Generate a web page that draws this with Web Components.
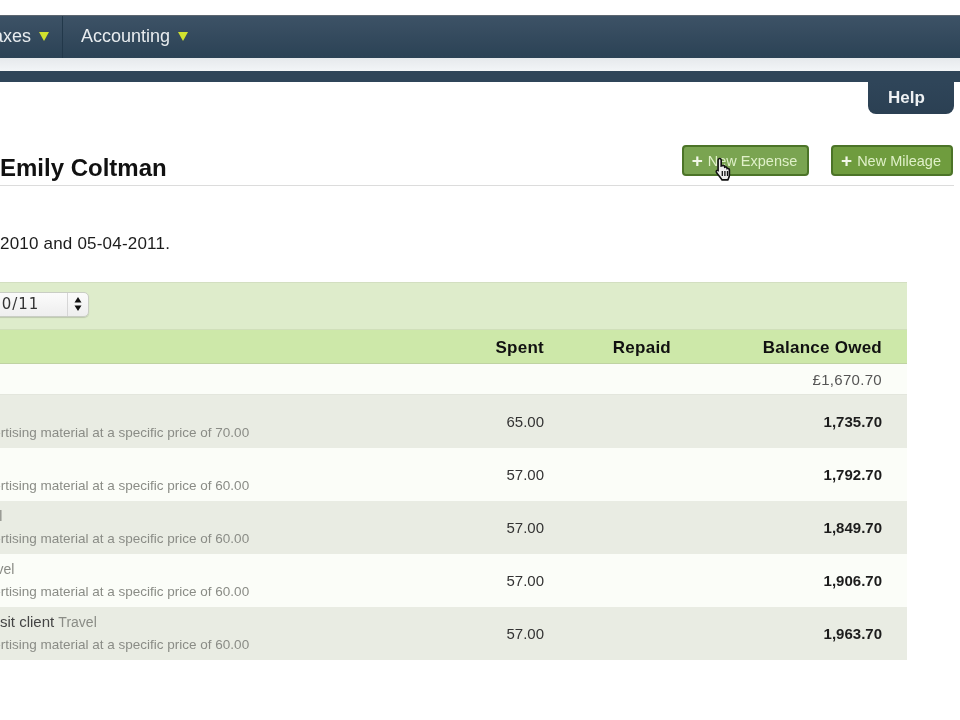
<!DOCTYPE html>
<html>
<head>
<meta charset="utf-8">
<title>Expenses</title>
<style>
	html, body { margin: 0; padding: 0; background: #fff; }
	body {
		width: 960px;
		height: 720px;
		overflow: hidden;
		position: relative;
		font-family: "Liberation Sans", Arial, sans-serif;
		color: #1c1c1c;
		filter: blur(0.6px);
	}
</style>
</head>
<body>
<main-nav>
	<nav-item style="--clip:-16px; --pad-right:13px" divider>Taxes</nav-item>
	<nav-item style="--clip:18px">Accounting</nav-item>
</main-nav>
<help-tab>Help</help-tab>
<page-head>
	<span>Emily Coltman</span>
	<new-button slot="actions" style="--w:127px; --bg:#7aa451">New Expense</new-button>
	<new-button slot="actions" style="--w:122px">New Mileage</new-button>
</page-head>
<date-range>2010 and 05-04-2011.</date-range>
<expense-table>
	<year-select slot="filter">2010/11</year-select>
	<expense-row head spent="Spent" repaid="Repaid" balance="Balance Owed" style="--h:34px"></expense-row>
	<expense-row opening balance="£1,670.70" style="--h:31px"></expense-row>
	<expense-row shade spent="65.00" balance="1,735.70" note="Advertising material at a specific price of 70.00"></expense-row>
	<expense-row spent="57.00" balance="1,792.70" note="Advertising material at a specific price of 60.00"></expense-row>
	<expense-row shade spent="57.00" balance="1,849.70" note="Advertising material at a specific price of 60.00"><em class="stub">Travel</em></expense-row>
	<expense-row spent="57.00" balance="1,906.70" note="Advertising material at a specific price of 60.00"><em class="inset">Travel</em></expense-row>
	<expense-row shade spent="57.00" balance="1,963.70" note="Advertising material at a specific price of 60.00">sit client <em>Travel</em></expense-row>
</expense-table>
<hand-cursor></hand-cursor>

<script>
class MainNav extends HTMLElement {
	constructor() {
		super();
		this.attachShadow({ mode: 'open' });
		this.shadowRoot.innerHTML = `
			<style>
				:host { display: block; margin-top: 15px; }
				.bar {
					display: flex;
					height: 43px;
					box-sizing: border-box;
					border-top: 1px solid #5c6670;
					background: linear-gradient(#3d5266, #2b4255);
				}
				.band { height: 13px; background: linear-gradient(#e6e9ec, #f2f5f7); }
				.sub { height: 11px; background: #2f4559; }
			</style>
			<div class="bar"><slot></slot></div>
			<div class="band"></div>
			<div class="sub"></div>
		`;
	}
}

class NavItem extends HTMLElement {
	constructor() {
		super();
		this.attachShadow({ mode: 'open' });
		this.shadowRoot.innerHTML = `
			<style>
				:host {
					display: flex;
					align-items: center;
					gap: 8px;
					margin-left: var(--clip, 0);
					padding-right: var(--pad-right, 0);
					padding-bottom: 2px;
					font-size: 18px;
					color: #e8ecef;
				}
				:host([divider]) { border-right: 1px solid #22384a; }
				i {
					width: 0;
					height: 0;
					margin-top: 1px;
					border-style: solid;
					border-width: 9px 5.500px 0 5.500px;
					border-color: #d2e22e transparent transparent transparent;
				}
			</style>
			<slot></slot><i></i>
		`;
	}
}

class HelpTab extends HTMLElement {
	constructor() {
		super();
		this.attachShadow({ mode: 'open' });
		this.shadowRoot.innerHTML = `
			<style>
				:host {
					display: flex;
					justify-content: center;
					align-items: center;
					box-sizing: border-box;
					width: 86px;
					height: 32px;
					margin-left: 868px;
					padding-right: 9px;
					border-radius: 0 0 8px 8px;
					background: linear-gradient(#2f4559, #2b4053);
					color: #eef1f3;
					font-size: 17px;
					font-weight: bold;
				}
			</style>
			<slot></slot>
		`;
	}
}

class PageHead extends HTMLElement {
	constructor() {
		super();
		this.attachShadow({ mode: 'open' });
		this.shadowRoot.innerHTML = `
			<style>
				:host {
					display: flex;
					justify-content: space-between;
					align-items: flex-start;
					box-sizing: border-box;
					width: 954px;
					height: 41px;
					margin-top: 31px;
					padding-right: 1px;
					border-bottom: 1px solid #dcdcdc;
					font-size: 24px;
					font-weight: bold;
					color: #111;
				}
				.title { padding-top: 10px; line-height: 26px; }
				.actions { display: flex; gap: 22px; }
			</style>
			<div class="title"><slot></slot></div>
			<div class="actions"><slot name="actions"></slot></div>
		`;
	}
}

class NewButton extends HTMLElement {
	constructor() {
		super();
		this.attachShadow({ mode: 'open' });
		this.shadowRoot.innerHTML = `
			<style>
				:host {
					display: flex;
					align-items: center;
					justify-content: center;
					gap: 5px;
					box-sizing: border-box;
					width: var(--w);
					height: 31px;
					padding-right: 2px;
					border: 2px solid #4c7428;
					border-radius: 4px;
					background: var(--bg, #6f9c3e);
					color: #dff0c8;
					font-size: 14.500px;
					font-weight: normal;
				}
				b { font-size: 19px; line-height: 18px; color: #f2f7e8; }
			</style>
			<b>+</b><slot></slot>
		`;
	}
}

class DateRange extends HTMLElement {
	constructor() {
		super();
		this.attachShadow({ mode: 'open' });
		this.shadowRoot.innerHTML = `
			<style>
				:host {
					display: block;
					margin-top: 48px;
					line-height: 20px;
					font-size: 17px;
					letter-spacing: 0.2px;
					color: #1c1c1c;
				}
			</style>
			<slot></slot>
		`;
	}
}

class YearSelect extends HTMLElement {
	constructor() {
		super();
		this.attachShadow({ mode: 'open' });
		this.shadowRoot.innerHTML = `
			<style>
				:host {
					display: flex;
					align-items: center;
					box-sizing: border-box;
					width: 120px;
					height: 25px;
					margin-left: -31px;
					border: 1px solid #c9cdc4;
					border-radius: 5px;
					background: linear-gradient(#fbfbfb, #eeeeee);
					box-shadow: 0 1px 1px rgba(0,0,0,0.15);
					font-family: "DejaVu Sans", sans-serif;
					font-size: 15px;
					color: #333;
				}
				span { flex: 1; letter-spacing: 1px; }
				i {
					display: flex;
					align-items: center;
					justify-content: center;
					width: 20px;
					height: 100%;
					border-left: 1px solid #d6d6d6;
				}
			</style>
			<span><slot></slot></span>
			<i><svg width="8" height="14" viewBox="0 0 8 14"><path d="M4 0 L7.500 5.500 H.5Z M4 14 L7.500 8.500 H.5Z" fill="#111"/></svg></i>
		`;
	}
}

class ExpenseTable extends HTMLElement {
	constructor() {
		super();
		this.attachShadow({ mode: 'open' });
		this.shadowRoot.innerHTML = `
			<style>
				:host {
					display: block;
					width: 907px;
					margin-top: 28px;
				}
				.filter {
					display: flex;
					align-items: center;
					box-sizing: border-box;
					height: 48px;
					padding-bottom: 4px;
					border-top: 1px solid #d3dfc1;
					border-bottom: 1px solid #d0dfba;
					background: #deeccb;
				}
			</style>
			<div class="filter"><slot name="filter"></slot></div>
			<slot></slot>
		`;
	}
}

class ExpenseRow extends HTMLElement {
	constructor() {
		super();
		this.attachShadow({ mode: 'open' });
		const text = (name) => this.getAttribute(name) || '';
		this.shadowRoot.innerHTML = `
			<style>
				:host {
					display: grid;
					grid-template-columns: 1fr 70px 127px 211px;
					align-items: center;
					box-sizing: border-box;
					height: var(--h, 53px);
					padding-right: 25px;
					background: #fbfdf8;
					font-size: 15px;
					color: #333;
					text-align: right;
				}
				:host([shade]) { background: #e9ece3; }
				:host([head]) {
					padding-top: 2px;
					background: #cde8a9;
					border-bottom: 1px solid #bfd3a2;
					font-size: 17px;
					letter-spacing: 0.25px;
					font-weight: bold;
					color: #111;
				}
				:host([opening]) {
					border-bottom: 1px solid #e3e6dd;
					letter-spacing: 0.3px;
					color: #555;
				}
				.desc {
					display: flex;
					flex-direction: column;
					justify-content: flex-end;
					align-self: stretch;
					padding-bottom: 7px;
					text-align: left;
				}
				.what { height: 16px; margin-bottom: 7px; font-size: 15px; color: #444; line-height: 16px; white-space: nowrap; }
				.note { margin-left: -30px; font-size: 13.500px; line-height: 16px; color: #8a8c86; white-space: nowrap; }
				.balance { font-weight: bold; color: #1c1c1c; }
				:host([head]) .balance, :host([opening]) .balance { font-weight: inherit; color: inherit; }
				::slotted(em) { font-style: normal; font-size: 14px; color: #8a8c86; }
				::slotted(em.inset) { margin-left: -24px; }
				::slotted(em.stub) { margin-left: -36px; }
			</style>
			<div class="desc">
				${text('note') ? `<div class="what"><slot></slot></div><div class="note">${text('note')}</div>` : ''}
			</div>
			<div>${text('spent')}</div>
			<div>${text('repaid')}</div>
			<div class="balance">${text('balance')}</div>
		`;
	}
}

class HandCursor extends HTMLElement {
	constructor() {
		super();
		this.attachShadow({ mode: 'open' });
		this.shadowRoot.innerHTML = `
			<style>
				:host { position: absolute; left: 715px; top: 157px; width: 18px; height: 24px; }
			</style>
			<svg width="18" height="24" viewBox="0 0 18 24">
				<path d="M4.500 1.500c1 0 1.700.7 1.700 1.700V9l1-.3c1.300-.5 2.200 0 2.400.8l.1.700c1.200-.5 2.100 0 2.300.8l.1.600c1.200-.4 2.300.2 2.300 1.300v5c0 2-1 3.500-1.600 5H7c-1.500-2.600-5.200-6.500-5.700-8-.3-1 .6-1.900 1.600-1.500l.2.100V3.200c0-1 .6-1.700 1.400-1.700z" fill="#eee" stroke="#111" stroke-width="1.600"/>
				<path d="M7.300 14v5M9.900 14v5M12.500 14v5" stroke="#111" stroke-width="1.300"/>
			</svg>
		`;
	}
}

customElements.define('main-nav', MainNav);
customElements.define('nav-item', NavItem);
customElements.define('help-tab', HelpTab);
customElements.define('page-head', PageHead);
customElements.define('new-button', NewButton);
customElements.define('date-range', DateRange);
customElements.define('year-select', YearSelect);
customElements.define('expense-table', ExpenseTable);
customElements.define('expense-row', ExpenseRow);
customElements.define('hand-cursor', HandCursor);
</script>
</body>
</html>
